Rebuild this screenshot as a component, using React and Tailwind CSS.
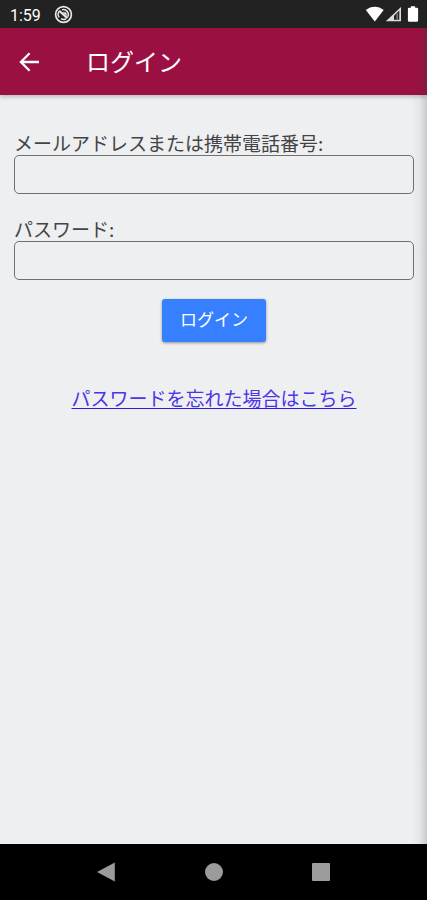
function StatusBar() {
  return (
    <div className="flex h-7 items-center bg-[#222222] pt-1 pr-2 pl-[10px] font-['Roboto',sans-serif] text-white">
      <span className="text-base leading-6">1:59</span>
      <svg className="mb-1 ml-[13px] size-[19px]" viewBox="0 0 19 19" fill="none" stroke="#e8e8e8" aria-hidden="true">
        <circle cx="9.5" cy="9.5" r="7.9" strokeWidth="1.7" />
        <path d="M5.2 12.4A5 5 0 0 1 5.6 6M8 4.8a5 5 0 0 1 5.8 7.2M12 14a5 5 0 0 1-5-.4" strokeWidth="1.4" />
        <path d="M5.2 5.8l8.2 7.4" strokeWidth="2.2" />
        <path d="M8.6 7.4h3.4l.8 3.4z" fill="#e8e8e8" strokeWidth="0.4" />
      </svg>
      <svg className="mb-1 ml-auto h-[18px] w-[54px]" viewBox="0 0 54 18" fill="#ffffff" aria-hidden="true">
        <path d="M0.8 5C6 0.5 13.5 0.5 18.7 5L9.8 16.4z" />
        <path d="M20.8 16.3L36 2V16.3z" fill="#dddddd" />
        <path d="M29 14.7V10.8L34.3 5.6V14.7z" fill="#222222" />
        <path d="M31.4 14.7V9.4l1.6-1.6v6.9z" fill="#777777" />
        <path d="M45.9 1.2h4.2v1.6H51.8q1.3 0 1.3 1.3V15.4q0 1.4-1.3 1.4h-7.6q-1.3 0-1.3-1.4V4.1q0-1.3 1.3-1.3h1.7z" />
      </svg>
    </div>
  );
}

function Header() {
  return (
    <header className="flex h-[67px] items-center bg-[#9b1042] pl-4 text-white shadow-[0_2px_4px_rgba(0,0,0,0.22)]">
      <button type="button" aria-label="戻る" className="flex size-7 items-center justify-center">
        <svg className="size-7" viewBox="0 0 28 28" fill="none" stroke="currentColor" strokeWidth="2.3" aria-hidden="true">
          <path d="M23 14H5M13.6 5.2L4.9 14l8.7 8.8" />
        </svg>
      </button>
      <h1 className="ml-[42px] pb-[2px] text-2xl leading-8">ログイン</h1>
    </header>
  );
}

function Field({ id, label, type }) {
  return (
    <div className="flex flex-col">
      <label htmlFor={id} className="text-[19px] leading-6 text-[#444444]">{label}</label>
      <input
        id={id}
        type={type}
        className="h-[39px] w-full rounded-[5px] border border-[#707073] bg-transparent px-2 text-[19px] text-[#333333]"
      />
    </div>
  );
}

function NavigationBar() {
  return (
    <nav className="flex h-14 items-center justify-center gap-[87px] bg-black text-[#9b9b9b]">
      <button type="button" aria-label="戻る">
        <svg className="size-5" viewBox="0 0 20 20" fill="currentColor" aria-hidden="true">
          <path d="M0 10L17.8 0.5V19.5z" />
        </svg>
      </button>
      <button type="button" aria-label="ホーム">
        <svg className="size-5" viewBox="0 0 20 20" fill="currentColor" aria-hidden="true">
          <circle cx="10" cy="10" r="9" />
        </svg>
      </button>
      <button type="button" aria-label="最近使ったアプリ">
        <svg className="size-5" viewBox="0 0 20 20" fill="currentColor" aria-hidden="true">
          <rect x="1" y="1" width="18" height="18" rx="1" />
        </svg>
      </button>
    </nav>
  );
}

export default function App() {
  return (
    <div className="flex min-h-screen flex-col bg-[#edeff1] font-['Noto_Sans_CJK_JP',sans-serif]">
      <StatusBar />
      <div className="relative flex grow flex-col">
        <Header />
        <main className="grow pt-9 pr-[13px] pl-[14px]">
          <form className="flex flex-col" onSubmit={(event) => event.preventDefault()}>
            <div className="flex flex-col gap-[23px]">
              <Field id="account" label="メールアドレスまたは携帯電話番号:" type="text" />
              <Field id="password" label="パスワード:" type="password" />
            </div>
            <button
              type="submit"
              className="mt-[19px] h-[43px] w-[104px] self-center rounded-[3px] bg-[#367fff] pb-1 text-[17px] leading-6 text-white shadow-[0_1px_3px_rgba(0,0,0,0.4)]"
            >
              ログイン
            </button>
            <a
              href="#reset"
              className="mt-11 self-center text-[19px] leading-6 text-[#4a35e8] underline decoration-[#3018e6] decoration-1 underline-offset-2"
            >
              パスワードを忘れた場合はこちら
            </a>
          </form>
        </main>
        <div className="pointer-events-none absolute inset-y-0 right-0 w-4 bg-linear-to-r from-transparent via-[rgba(40,60,60,0.04)] to-[rgba(40,60,60,0.2)]" />
      </div>
      <NavigationBar />
    </div>
  );
}
